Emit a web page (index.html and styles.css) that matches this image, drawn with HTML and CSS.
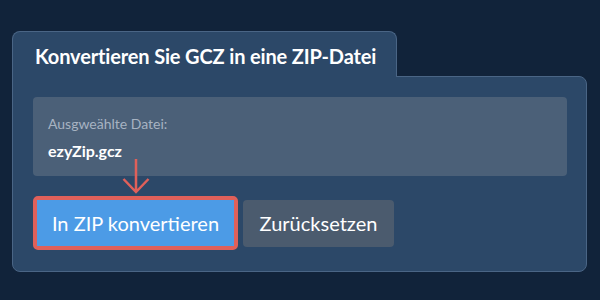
FILE: index.html
```html
<!DOCTYPE html>
<html lang="de">

<head>
    <meta charset="UTF-8">
    <meta name="viewport" content="width=device-width, initial-scale=1.0">
    <title>GCZ zu ZIP</title>
    <link rel="stylesheet" href="styles.css">
</head>

<body>
    <div class="card">
        <div class="tab">
            <h1>Konvertieren Sie GCZ in eine ZIP-Datei</h1>
        </div>
        <div class="panel">
            <div class="file-box">
                <div class="file-label">Ausgweählte Datei:</div>
                <div class="file-name">ezyZip.gcz</div>
            </div>
            <div class="actions">
                <div class="highlight">
                    <button class="btn btn-primary">In ZIP konvertieren</button>
                </div>
                <button class="btn btn-gray">Zurücksetzen</button>
            </div>
            <!-- Pfeil zeigt auf den Button -->
            <svg class="arrow" width="28" height="36" viewBox="0 0 28 36">
                <path d="M14 1 L14 34 M1.5 21 L14 34 L26.5 21" fill="none" stroke="#e0605a" stroke-width="2.5" />
            </svg>
        </div>
    </div>
</body>

</html>
```

FILE: styles.css
```css
* {
    padding: 0;
    margin: 0;
    box-sizing: border-box;
}

body {
    background-color: #11233a;
    font-family: Lato, "Open Sans", sans-serif;
    color: #fff;
}

.card {
    width: 575px;
    margin: 31px 0 0 12px;
}

.tab {
    width: 385px;
    height: 46px;
    background-color: #2c4868;
    border: 1px solid #4a6585;
    border-bottom: none;
    border-radius: 8px 8px 0 0;
    padding: 0 0 0 22px;
    position: relative;
    z-index: 1;
    margin-bottom: -1px;
    display: flex;
    align-items: center;
}

.tab h1 {
    font-size: 20px;
    font-weight: 700;
    letter-spacing: -0.15px;
    padding-top: 3px;
}

.panel {
    position: relative;
    background-color: #2c4868;
    border: 1px solid #4a6585;
    border-radius: 0 8px 8px 8px;
    padding: 20px 19px 21px 20px;
}

.file-box {
    height: 79px;
    background-color: #4b6078;
    border-radius: 4px;
    padding: 18px 15px 0 15px;
}

.file-label {
    font-size: 14px;
    color: #a7b3c2;
    line-height: 18px;
}

.file-name {
    font-size: 16px;
    font-weight: 700;
    margin-top: 8px;
    line-height: 20px;
}

.actions {
    display: flex;
    align-items: center;
    gap: 5px;
    margin-top: 20px;
}

.highlight {
    border: 4px solid #e0605a;
    border-radius: 5px;
}

.btn {
    font-family: Lato, "Open Sans", sans-serif;
    font-size: 20px;
    color: #fff;
    border: none;
    height: 46px;
    border-radius: 3px;
    display: block;
}

.btn-primary {
    width: 197px;
    background-color: #4c9be6;
    border-radius: 0;
}

.btn-gray {
    width: 151px;
    height: 47px;
    background-color: #4b5b6e;
    border-radius: 4px;
}

.arrow {
    position: absolute;
    left: 109px;
    top: 81px;
}
```
